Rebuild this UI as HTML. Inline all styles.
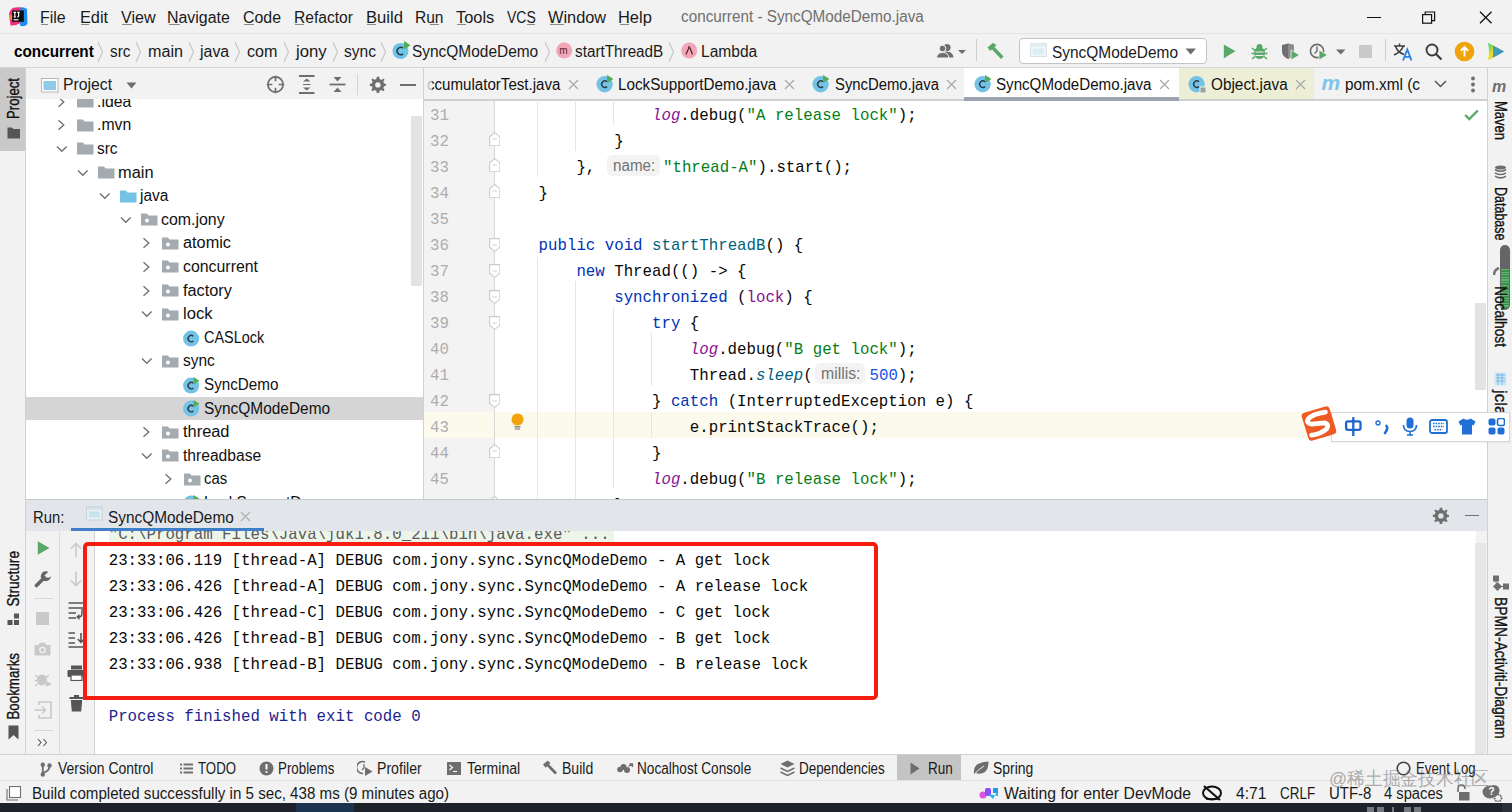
<!DOCTYPE html><html><head><meta charset="utf-8"><style>
html,body{margin:0;padding:0;width:1512px;height:812px;overflow:hidden;background:#f2f2f2;}
.a{position:absolute;}
.t{position:absolute;white-space:pre;transform-origin:0 0;}
.v{position:absolute;white-space:pre;writing-mode:vertical-rl;-webkit-text-stroke:0.35px currentColor;line-height:20px;width:20px;font-family:'Liberation Sans',sans-serif;transform-origin:50% 0;}
</style></head><body>
<div class="a" style="left:0px;top:33px;width:1512px;height:1px;background:#e3e3e3"></div>
<svg class="a" style="left:8px;top:6px;" width="20" height="21" viewBox="0 0 20 21"><path d="M11.5 1.5 Q16 0.5 19 3 L19.5 18 Q16 21.5 12 19.5 Z" fill="#1c8ef0"></path><path d="M5.5 1.8 Q9 0.8 12.5 1.5 L12.5 17 Q7 20 2.5 19.5 Q1.5 13 1 7.5 Q2.5 3 5.5 1.8 Z" fill="#f0307f"></path><path d="M1 8 Q2.5 10 4 9 L4 14 Q2 13.5 1.2 12 Z" fill="#fb8c2a"></path><rect x="4.2" y="4.5" width="11.6" height="11.3" fill="#0c0c0c"></rect><rect x="5.6" y="13.2" width="4.8" height="1.2" fill="#fff"></rect><path d="M5.6 6.3 H8 M6.8 6.3 V11 M5.6 11 H8 M9.2 6.3 H11.6 M10.6 6.3 V10 Q10.6 11 9.2 11" fill="none" stroke="#fff" stroke-width="1.2"></path></svg>
<div class="t" style="left: 40.3px; top: 8px; font-size: 16px; color: rgb(26, 26, 26); font-family: &quot;Liberation Sans&quot;, sans-serif; line-height: 20px; transform: scaleX(0.9968);">File</div>
<div class="t" style="left: 79.5px; top: 8px; font-size: 16px; color: rgb(26, 26, 26); font-family: &quot;Liberation Sans&quot;, sans-serif; line-height: 20px; transform: scaleX(1.0189);">Edit</div>
<div class="t" style="left: 120.5px; top: 8px; font-size: 16px; color: rgb(26, 26, 26); font-family: &quot;Liberation Sans&quot;, sans-serif; line-height: 20px; transform: scaleX(1.0061);">View</div>
<div class="t" style="left: 167.2px; top: 8px; font-size: 16px; color: rgb(26, 26, 26); font-family: &quot;Liberation Sans&quot;, sans-serif; line-height: 20px; transform: scaleX(0.9944);">Navigate</div>
<div class="t" style="left: 243px; top: 8px; font-size: 16px; color: rgb(26, 26, 26); font-family: &quot;Liberation Sans&quot;, sans-serif; line-height: 20px; transform: scaleX(0.9935);">Code</div>
<div class="t" style="left: 294px; top: 8px; font-size: 16px; color: rgb(26, 26, 26); font-family: &quot;Liberation Sans&quot;, sans-serif; line-height: 20px; transform: scaleX(0.9757);">Refactor</div>
<div class="t" style="left: 366px; top: 8px; font-size: 16px; color: rgb(26, 26, 26); font-family: &quot;Liberation Sans&quot;, sans-serif; line-height: 20px; transform: scaleX(1.04);">Build</div>
<div class="t" style="left: 415.2px; top: 8px; font-size: 16px; color: rgb(26, 26, 26); font-family: &quot;Liberation Sans&quot;, sans-serif; line-height: 20px; transform: scaleX(0.9707);">Run</div>
<div class="t" style="left: 455.7px; top: 8px; font-size: 16px; color: rgb(26, 26, 26); font-family: &quot;Liberation Sans&quot;, sans-serif; line-height: 20px; transform: scaleX(1.0252);">Tools</div>
<div class="t" style="left: 507px; top: 8px; font-size: 16px; color: rgb(26, 26, 26); font-family: &quot;Liberation Sans&quot;, sans-serif; line-height: 20px; transform: scaleX(0.8752);">VCS</div>
<div class="t" style="left: 548.3px; top: 8px; font-size: 16px; color: rgb(26, 26, 26); font-family: &quot;Liberation Sans&quot;, sans-serif; line-height: 20px; transform: scaleX(1.021);">Window</div>
<div class="t" style="left: 618.4px; top: 8px; font-size: 16px; color: rgb(26, 26, 26); font-family: &quot;Liberation Sans&quot;, sans-serif; line-height: 20px; transform: scaleX(1.0272);">Help</div>
<div class="a" style="left:41px;top:24px;width:7px;height:1px;background:#8a8a8a"></div>
<div class="a" style="left:80.5px;top:24px;width:8px;height:1px;background:#8a8a8a"></div>
<div class="a" style="left:121.5px;top:24px;width:10px;height:1px;background:#8a8a8a"></div>
<div class="a" style="left:168.5px;top:24px;width:11px;height:1px;background:#8a8a8a"></div>
<div class="a" style="left:244px;top:24px;width:10px;height:1px;background:#8a8a8a"></div>
<div class="a" style="left:295px;top:24px;width:9px;height:1px;background:#8a8a8a"></div>
<div class="a" style="left:367px;top:24px;width:9px;height:1px;background:#8a8a8a"></div>
<div class="a" style="left:430px;top:24px;width:9px;height:1px;background:#8a8a8a"></div>
<div class="a" style="left:457px;top:24px;width:9px;height:1px;background:#8a8a8a"></div>
<div class="a" style="left:527px;top:24px;width:8px;height:1px;background:#8a8a8a"></div>
<div class="a" style="left:549.5px;top:24px;width:14px;height:1px;background:#8a8a8a"></div>
<div class="a" style="left:619.5px;top:24px;width:9px;height:1px;background:#8a8a8a"></div>
<div class="t" style="left: 681.4px; top: 7px; font-size: 16px; color: rgb(111, 111, 111); font-family: &quot;Liberation Sans&quot;, sans-serif; line-height: 20px; transform: scaleX(0.9547);">concurrent - SyncQModeDemo.java</div>
<div class="a" style="left:1367px;top:16.5px;width:13.5px;height:1.2px;background:#111"></div>
<svg class="a" style="left:1422px;top:11px;" width="15" height="13" viewBox="0 0 15 13"><rect x="0.6" y="3.6" width="9" height="8.6" fill="none" stroke="#111" stroke-width="1.2"></rect><path d="M3.2 3.6 V1 H12.6 V9.6 H9.6" fill="none" stroke="#111" stroke-width="1.2"></path></svg>
<svg class="a" style="left:1479px;top:11px;" width="14" height="13" viewBox="0 0 14 13"><path d="M1 0.8 L12.5 12.2 M12.5 0.8 L1 12.2" stroke="#111" stroke-width="1.3"></path></svg>
<div class="a" style="left:0px;top:67px;width:1512px;height:1px;background:#d4d4d4"></div>
<div class="t" style="left: 13.5px; top: 42px; font-size: 16px; color: rgb(0, 0, 0); font-family: &quot;Liberation Sans&quot;, sans-serif; line-height: 20px; font-weight: bold; transform: scaleX(0.9548);">concurrent</div>
<div class="t" style="left: 110px; top: 42px; font-size: 16px; color: rgb(26, 26, 26); font-family: &quot;Liberation Sans&quot;, sans-serif; line-height: 20px; transform: scaleX(0.9565);">src</div>
<div class="t" style="left: 148px; top: 42px; font-size: 16px; color: rgb(26, 26, 26); font-family: &quot;Liberation Sans&quot;, sans-serif; line-height: 20px; transform: scaleX(1.009);">main</div>
<div class="t" style="left: 200.4px; top: 42px; font-size: 16px; color: rgb(26, 26, 26); font-family: &quot;Liberation Sans&quot;, sans-serif; line-height: 20px; transform: scaleX(0.9946);">java</div>
<div class="t" style="left: 247px; top: 42px; font-size: 16px; color: rgb(26, 26, 26); font-family: &quot;Liberation Sans&quot;, sans-serif; line-height: 20px; transform: scaleX(1.0055);">com</div>
<div class="t" style="left: 296px; top: 42px; font-size: 16px; color: rgb(26, 26, 26); font-family: &quot;Liberation Sans&quot;, sans-serif; line-height: 20px; transform: scaleX(1.0457);">jony</div>
<div class="t" style="left: 344px; top: 42px; font-size: 16px; color: rgb(26, 26, 26); font-family: &quot;Liberation Sans&quot;, sans-serif; line-height: 20px; transform: scaleX(0.9725);">sync</div>
<div class="t" style="left: 412.4px; top: 42px; font-size: 16px; color: rgb(26, 26, 26); font-family: &quot;Liberation Sans&quot;, sans-serif; line-height: 20px; transform: scaleX(0.9654);">SyncQModeDemo</div>
<div class="t" style="left: 575px; top: 42px; font-size: 16px; color: rgb(26, 26, 26); font-family: &quot;Liberation Sans&quot;, sans-serif; line-height: 20px; transform: scaleX(0.9548);">startThreadB</div>
<div class="t" style="left: 701px; top: 42px; font-size: 16px; color: rgb(26, 26, 26); font-family: &quot;Liberation Sans&quot;, sans-serif; line-height: 20px; transform: scaleX(0.9718);">Lambda</div>
<svg class="a" style="left:97px;top:41px;" width="7" height="22" viewBox="0 0 7 22"><path d="M1 1 L5.5 11 L1 21" fill="none" stroke="#c4c4c4" stroke-width="1.1"></path></svg>
<svg class="a" style="left:135px;top:41px;" width="7" height="22" viewBox="0 0 7 22"><path d="M1 1 L5.5 11 L1 21" fill="none" stroke="#c4c4c4" stroke-width="1.1"></path></svg>
<svg class="a" style="left:188px;top:41px;" width="7" height="22" viewBox="0 0 7 22"><path d="M1 1 L5.5 11 L1 21" fill="none" stroke="#c4c4c4" stroke-width="1.1"></path></svg>
<svg class="a" style="left:234px;top:41px;" width="7" height="22" viewBox="0 0 7 22"><path d="M1 1 L5.5 11 L1 21" fill="none" stroke="#c4c4c4" stroke-width="1.1"></path></svg>
<svg class="a" style="left:283px;top:41px;" width="7" height="22" viewBox="0 0 7 22"><path d="M1 1 L5.5 11 L1 21" fill="none" stroke="#c4c4c4" stroke-width="1.1"></path></svg>
<svg class="a" style="left:331.7px;top:41px;" width="7" height="22" viewBox="0 0 7 22"><path d="M1 1 L5.5 11 L1 21" fill="none" stroke="#c4c4c4" stroke-width="1.1"></path></svg>
<svg class="a" style="left:380px;top:41px;" width="7" height="22" viewBox="0 0 7 22"><path d="M1 1 L5.5 11 L1 21" fill="none" stroke="#c4c4c4" stroke-width="1.1"></path></svg>
<svg class="a" style="left:544px;top:41px;" width="7" height="22" viewBox="0 0 7 22"><path d="M1 1 L5.5 11 L1 21" fill="none" stroke="#c4c4c4" stroke-width="1.1"></path></svg>
<svg class="a" style="left:668px;top:41px;" width="7" height="22" viewBox="0 0 7 22"><path d="M1 1 L5.5 11 L1 21" fill="none" stroke="#c4c4c4" stroke-width="1.1"></path></svg>
<svg class="a" style="left:392px;top:40px;" width="20" height="20" viewBox="0 0 20 20"><circle cx="8.5" cy="11" r="8" fill="#6ec3e8"></circle><path d="M11 8.2 A3.6 3.6 0 1 0 11 13.8" fill="none" stroke="#2b3a45" stroke-width="1.5"></path><path d="M12 1 L18.5 5.2 L12 9.4 Z" fill="#4fae5a"></path></svg>
<svg class="a" style="left:556px;top:42px;" width="17" height="17" viewBox="0 0 17 17"><circle cx="8.2" cy="8.5" r="8" fill="#f2a7b8"></circle><text x="3.3" y="12" font-family="Liberation Sans" font-size="10" fill="#5a2030">m</text></svg>
<svg class="a" style="left:681px;top:42px;" width="17" height="17" viewBox="0 0 17 17"><circle cx="8.2" cy="8.5" r="8" fill="#f2a7b8"></circle><path d="M5 12.5 L8.2 5 M7.2 4.5 Q8.5 4.6 9 6 L11.5 12.5" fill="none" stroke="#5a2030" stroke-width="1.2"></path></svg>
<svg class="a" style="left:936px;top:43px;" width="32" height="17" viewBox="0 0 32 17"><circle cx="11" cy="4.6" r="3.6" fill="#6e6e6e"></circle><path d="M3.5 14.5 Q4 8.8 11 8.8 Q17 8.8 17.5 14.5 Z" fill="#6e6e6e"></path><circle cx="6.5" cy="5.5" r="3.3" fill="#6e6e6e" stroke="#f2f2f2" stroke-width="1"></circle><path d="M0.5 15 Q1 9.5 6.5 9.5 Q12.5 9.5 13 15 Z" fill="#6e6e6e" stroke="#f2f2f2" stroke-width="1"></path><path d="M22 7 L30 7 L26 11 Z" fill="#6e6e6e"></path></svg>
<div class="a" style="left:976px;top:39px;width:1px;height:22px;background:#cfcfcf"></div>
<svg class="a" style="left:986px;top:42px;" width="19" height="18" viewBox="0 0 19 18"><path d="M1.5 5.5 L7 0.8 L10.5 3.2 L8.5 5 L17.5 14.5 L15 17 L6 7.5 L4.3 9 Z" fill="#59a869"></path></svg>
<div class="a" style="left:1018.5px;top:38px;width:188.5px;height:25.5px;background:#fff;border:1px solid #c4c4c4;border-radius:4px;box-sizing:border-box"></div>
<svg class="a" style="left:1030px;top:42px;" width="18" height="16" viewBox="0 0 18 16"><rect x="0.5" y="1.5" width="16" height="13" fill="#eef6f8" stroke="#d6e4e8"></rect><rect x="0.5" y="1.5" width="16" height="3" fill="#e0ecef"></rect><rect x="3" y="6.5" width="11" height="6" fill="#d9eef2"></rect></svg>
<div class="t" style="left: 1052px; top: 43px; font-size: 16px; color: rgb(26, 26, 26); font-family: &quot;Liberation Sans&quot;, sans-serif; line-height: 20px; transform: scaleX(0.9639);">SyncQModeDemo</div>
<svg class="a" style="left:1185px;top:48px;" width="12" height="7" viewBox="0 0 12 7"><path d="M0.5 0.5 L11 0.5 L5.75 6.5 Z" fill="#6e6e6e"></path></svg>
<svg class="a" style="left:1223px;top:44px;" width="13" height="15" viewBox="0 0 13 15"><path d="M0.8 0.5 L12.5 7.3 L0.8 14.2 Z" fill="#59a869"></path></svg>
<svg class="a" style="left:1251px;top:43px;" width="17" height="17" viewBox="0 0 17 17"><ellipse cx="8.5" cy="10" rx="5.5" ry="6" fill="#59a869"></ellipse><circle cx="8.5" cy="4" r="3" fill="#59a869"></circle><path d="M1 5 L4 7.5 M16 5 L13 7.5 M0.5 10.5 H3.5 M16.5 10.5 H13.5 M1 16 L4 13.5 M16 16 L13 13.5" stroke="#59a869" stroke-width="1.6"></path><path d="M4.5 9 H12.5 M4.5 12.5 H12.5" stroke="#f2f2f2" stroke-width="1.1"></path></svg>
<svg class="a" style="left:1281px;top:43px;" width="19" height="17" viewBox="0 0 19 17"><path d="M1 2 L7 0.5 L13 2 V8 Q13 13.5 7 16 Q1 13.5 1 8 Z" fill="#6e6e6e"></path><path d="M7 0.5 V16 Q13 13.5 13 8 V2 Z" fill="#8c8c8c"></path><path d="M10 7 L18.5 12 L10 17 Z" fill="#59a869" stroke="#f2f2f2" stroke-width="0.8"></path></svg>
<svg class="a" style="left:1309px;top:43px;" width="20" height="17" viewBox="0 0 20 17"><circle cx="8" cy="8" r="6.6" fill="none" stroke="#6e6e6e" stroke-width="1.6"></circle><path d="M8 3.5 V8 L5.5 10.5" fill="none" stroke="#6e6e6e" stroke-width="1.5"></path><path d="M10 7 L18.5 12 L10 17 Z" fill="#59a869" stroke="#f2f2f2" stroke-width="0.8"></path></svg>
<svg class="a" style="left:1336px;top:49px;" width="10" height="6" viewBox="0 0 10 6"><path d="M0 0.5 H9.5 L4.75 5.5 Z" fill="#6e6e6e"></path></svg>
<div class="a" style="left:1359px;top:45px;width:12.5px;height:12.5px;background:#c9c9c9;border-radius:1px"></div>
<div class="a" style="left:1384.5px;top:39px;width:1px;height:22px;background:#cfcfcf"></div>
<svg class="a" style="left:1393px;top:42px;" width="21" height="19" viewBox="0 0 21 19"><path d="M1 4 H12 M6.5 1.5 V4 M2.5 4 Q4 10 11 12.5 M10.5 4 Q8 10 1 13" fill="none" stroke="#3c3c3c" stroke-width="1.5"></path><path d="M10 18.5 L14.3 7.5 L18.5 18.5 M11.5 14.8 H17" fill="none" stroke="#2680eb" stroke-width="1.8"></path></svg>
<svg class="a" style="left:1425px;top:43px;" width="18" height="18" viewBox="0 0 18 18"><circle cx="7" cy="7" r="5.5" fill="none" stroke="#3c3c3c" stroke-width="1.9"></circle><path d="M11 11 L16.5 16.5" stroke="#3c3c3c" stroke-width="2.2"></path></svg>
<svg class="a" style="left:1454px;top:41px;" width="21" height="21" viewBox="0 0 21 21"><circle cx="10.5" cy="10.5" r="9.8" fill="#f0a30a"></circle><path d="M10.5 15.5 V6.5 M6.8 9.8 L10.5 6.2 L14.2 9.8" fill="none" stroke="#fff" stroke-width="1.9"></path></svg>
<svg class="a" style="left:1487px;top:42px;" width="18" height="19" viewBox="0 0 18 19"><defs><linearGradient id="tbg" x1="0" y1="0" x2="1" y2="1"><stop offset="0" stop-color="#2ad27a"></stop><stop offset="0.45" stop-color="#f7e21a"></stop><stop offset="1" stop-color="#1a7ff0"></stop></linearGradient></defs><path d="M1 1 Q10 5 17 9.5 Q10 14 1 18 Q3 9.5 1 1 Z" fill="url(#tbg)"></path><path d="M6 3.5 Q12 6.5 17 9.5 Q12 12.5 6 15.5 Z" fill="#1a8bd8" opacity="0.8"></path></svg>
<div class="a" style="left:25px;top:68px;width:1px;height:712px;background:#d1d1d1"></div>
<div class="a" style="left:0px;top:68px;width:25px;height:83px;background:#c9c9c9"></div>
<div class="v" style="left: 4px; top: 78px; font-size: 16px; color: rgb(17, 17, 17); transform: translateY(41px) rotate(180deg) scaleY(0.8233);">Project</div>
<svg class="a" style="left:7px;top:126px;" width="14" height="13" viewBox="0 0 14 13"><path d="M0.5 1.5 H5 L6.5 3 H13 V12.5 H0.5 Z" fill="#555"></path></svg>
<div class="v" style="left: 4px; top: 551px; font-size: 16px; color: rgb(17, 17, 17); transform: translateY(55.5px) rotate(180deg) scaleY(0.8549);">Structure</div>
<svg class="a" style="left:7px;top:613px;" width="13" height="13" viewBox="0 0 13 13"><rect x="0.5" y="7" width="5" height="5" fill="#555"></rect><rect x="7" y="7" width="5" height="5" fill="#555"></rect><rect x="7" y="0.5" width="5" height="5" fill="#555"></rect></svg>
<div class="v" style="left: 4px; top: 653px; font-size: 16px; color: rgb(17, 17, 17); transform: translateY(66.5px) rotate(180deg) scaleY(0.8309);">Bookmarks</div>
<svg class="a" style="left:8px;top:725px;" width="11" height="15" viewBox="0 0 11 15"><path d="M0.5 0.5 H10.5 V14.5 L5.5 10 L0.5 14.5 Z" fill="#555"></path></svg>
<div class="a" style="left:26px;top:68px;width:397.5px;height:31px;background:#f2f2f2"></div>
<div class="a" style="left:26px;top:99px;width:397.5px;height:400px;background:#fff;overflow:hidden"></div>
<svg class="a" style="left:41px;top:78px;" width="18" height="15" viewBox="0 0 18 15"><rect x="0.5" y="0.5" width="16.5" height="13.5" fill="#fff" stroke="#b8b8b8"></rect><rect x="2.5" y="3" width="12.5" height="9" fill="#8fcbe9"></rect></svg>
<div class="t" style="left: 63px; top: 75px; font-size: 16px; color: rgb(26, 26, 26); font-family: &quot;Liberation Sans&quot;, sans-serif; line-height: 20px; transform: scaleX(0.984);">Project</div>
<svg class="a" style="left:126px;top:82px;" width="11" height="7" viewBox="0 0 11 7"><path d="M0.5 0.5 H10.5 L5.5 6.5 Z" fill="#6e6e6e"></path></svg>
<svg class="a" style="left:266px;top:75px;" width="19" height="19" viewBox="0 0 19 19"><circle cx="9.5" cy="9.5" r="7.6" fill="none" stroke="#6e6e6e" stroke-width="1.7"></circle><path d="M9.5 0.8 V6.3 M9.5 12.7 V18.2 M0.8 9.5 H6.3 M12.7 9.5 H18.2" stroke="#6e6e6e" stroke-width="1.7"></path></svg>
<svg class="a" style="left:299px;top:75px;" width="16" height="19" viewBox="0 0 16 19"><path d="M0 1 H15.5 M0 18 H15.5" stroke="#6e6e6e" stroke-width="1.8"></path><path d="M4 6.5 L7.75 3.5 L11.5 6.5 Z M4 12.5 L7.75 15.5 L11.5 12.5 Z" fill="#6e6e6e"></path><path d="M4 9.5 H11.5" stroke="#6e6e6e" stroke-width="1"></path></svg>
<svg class="a" style="left:329px;top:75px;" width="17" height="19" viewBox="0 0 17 19"><path d="M0.5 9.5 H16.5" stroke="#6e6e6e" stroke-width="1.8"></path><path d="M4.5 2 L8.5 6.5 L12.5 2 Z M4.5 17 L8.5 12.5 L12.5 17 Z" fill="#6e6e6e"></path></svg>
<div class="a" style="left:357px;top:74px;width:1px;height:21px;background:#d4d4d4"></div>
<svg class="a" style="left:369px;top:76px;" width="17" height="17" viewBox="0 0 17 17"><path d="M8.5 0.8 L10.2 0.8 L10.6 3 L12.6 3.9 L14.4 2.6 L15.6 3.8 L14.3 5.7 L15.1 7.6 L17 8 V9.8 L15.1 10.2 L14.3 12.1 L15.6 14 L14.2 15.2 L12.4 13.9 L10.5 14.7 L10.2 17 H7.8 L7.4 14.7 L5.5 13.9 L3.6 15.2 L2.3 14 L3.6 12.1 L2.8 10.2 L0.8 9.8 V7.8 L2.8 7.4 L3.6 5.6 L2.3 3.7 L3.6 2.4 L5.5 3.8 L7.4 3 L7.8 0.8 Z" fill="#6e6e6e"></path><circle cx="8.9" cy="8.9" r="2.7" fill="#f2f2f2"></circle></svg>
<div class="a" style="left:400px;top:84px;width:15.5px;height:1.8px;background:#6e6e6e"></div>
<div class="a" style="left:26px;top:397px;width:397.5px;height:23px;background:#d5d5d5"></div>
<div class="a" style="left:26px;top:99px;width:397px;height:400px;overflow:hidden">
<svg class="a" style="left:31.0px;top:-3.299999999999997px;" width="9" height="12" viewBox="0 0 9 12"><path d="M1.5 1.2 L6.8 6 L1.5 10.8" fill="none" stroke="#6e6e6e" stroke-width="1.3"></path></svg>
<svg class="a" style="left:51.0px;top:-3.799999999999997px;" width="17" height="13" viewBox="0 0 17 13"><path d="M0 0.5 H6 L7.5 2.5 H16.5 V12.5 H0 Z" fill="#a3aab0"></path></svg>
<div class="t" style="left: 71.1px; top: -7.2px; font-size: 16px; color: rgb(17, 17, 17); font-family: &quot;Liberation Sans&quot;, sans-serif; line-height: 20px; transform: scaleX(0.9855);">.idea</div>
<svg class="a" style="left:31.0px;top:20.299999999999997px;" width="9" height="12" viewBox="0 0 9 12"><path d="M1.5 1.2 L6.8 6 L1.5 10.8" fill="none" stroke="#6e6e6e" stroke-width="1.3"></path></svg>
<svg class="a" style="left:51.0px;top:19.799999999999997px;" width="17" height="13" viewBox="0 0 17 13"><path d="M0 0.5 H6 L7.5 2.5 H16.5 V12.5 H0 Z" fill="#a3aab0"></path></svg>
<div class="t" style="left: 71.1px; top: 16.4px; font-size: 16px; color: rgb(17, 17, 17); font-family: &quot;Liberation Sans&quot;, sans-serif; line-height: 20px; transform: scaleX(0.9864);">.mvn</div>
<svg class="a" style="left:30.0px;top:45.89999999999998px;" width="12" height="8" viewBox="0 0 12 8"><path d="M1 1.5 L5.8 6.3 L10.6 1.5" fill="none" stroke="#6e6e6e" stroke-width="1.3"></path></svg>
<svg class="a" style="left:51.0px;top:43.39999999999998px;" width="17" height="13" viewBox="0 0 17 13"><path d="M0 0.5 H6 L7.5 2.5 H16.5 V12.5 H0 Z" fill="#a3aab0"></path></svg>
<div class="t" style="left: 71.1px; top: 40px; font-size: 16px; color: rgb(17, 17, 17); font-family: &quot;Liberation Sans&quot;, sans-serif; line-height: 20px; transform: scaleX(0.9612);">src</div>
<svg class="a" style="left:51.349999999999994px;top:69.5px;" width="12" height="8" viewBox="0 0 12 8"><path d="M1 1.5 L5.8 6.3 L10.6 1.5" fill="none" stroke="#6e6e6e" stroke-width="1.3"></path></svg>
<svg class="a" style="left:72.35px;top:67.0px;" width="17" height="13" viewBox="0 0 17 13"><path d="M0 0.5 H6 L7.5 2.5 H16.5 V12.5 H0 Z" fill="#a3aab0"></path></svg>
<div class="t" style="left: 92.45px; top: 63.6px; font-size: 16px; color: rgb(17, 17, 17); font-family: &quot;Liberation Sans&quot;, sans-serif; line-height: 20px; transform: scaleX(1.0249);">main</div>
<svg class="a" style="left:72.7px;top:93.1px;" width="12" height="8" viewBox="0 0 12 8"><path d="M1 1.5 L5.8 6.3 L10.6 1.5" fill="none" stroke="#6e6e6e" stroke-width="1.3"></path></svg>
<svg class="a" style="left:93.7px;top:90.6px;" width="17" height="13" viewBox="0 0 17 13"><path d="M0 0.5 H6 L7.5 2.5 H16.5 V12.5 H0 Z" fill="#74c3e6"></path></svg>
<div class="t" style="left: 113.8px; top: 87.2px; font-size: 16px; color: rgb(17, 17, 17); font-family: &quot;Liberation Sans&quot;, sans-serif; line-height: 20px; transform: scaleX(0.9673);">java</div>
<svg class="a" style="left:94.05000000000001px;top:116.69999999999999px;" width="12" height="8" viewBox="0 0 12 8"><path d="M1 1.5 L5.8 6.3 L10.6 1.5" fill="none" stroke="#6e6e6e" stroke-width="1.3"></path></svg>
<svg class="a" style="left:115.05000000000001px;top:114.19999999999999px;" width="17" height="13" viewBox="0 0 17 13"><path d="M0 0.5 H6 L7.5 2.5 H16.5 V12.5 H0 Z" fill="#a3aab0"></path><circle cx="6" cy="7.6" r="2" fill="#fff"></circle></svg>
<div class="t" style="left: 135.15px; top: 110.8px; font-size: 16px; color: rgb(17, 17, 17); font-family: &quot;Liberation Sans&quot;, sans-serif; line-height: 20px; transform: scaleX(0.994);">com.jony</div>
<svg class="a" style="left:116.4px;top:138.3px;" width="9" height="12" viewBox="0 0 9 12"><path d="M1.5 1.2 L6.8 6 L1.5 10.8" fill="none" stroke="#6e6e6e" stroke-width="1.3"></path></svg>
<svg class="a" style="left:136.4px;top:137.8px;" width="17" height="13" viewBox="0 0 17 13"><path d="M0 0.5 H6 L7.5 2.5 H16.5 V12.5 H0 Z" fill="#a3aab0"></path><circle cx="6" cy="7.6" r="2" fill="#fff"></circle></svg>
<div class="t" style="left: 156.5px; top: 134.4px; font-size: 16px; color: rgb(17, 17, 17); font-family: &quot;Liberation Sans&quot;, sans-serif; line-height: 20px; transform: scaleX(1.0186);">atomic</div>
<svg class="a" style="left:116.4px;top:161.90000000000003px;" width="9" height="12" viewBox="0 0 9 12"><path d="M1.5 1.2 L6.8 6 L1.5 10.8" fill="none" stroke="#6e6e6e" stroke-width="1.3"></path></svg>
<svg class="a" style="left:136.4px;top:161.40000000000003px;" width="17" height="13" viewBox="0 0 17 13"><path d="M0 0.5 H6 L7.5 2.5 H16.5 V12.5 H0 Z" fill="#a3aab0"></path><circle cx="6" cy="7.6" r="2" fill="#fff"></circle></svg>
<div class="t" style="left: 156.5px; top: 158px; font-size: 16px; color: rgb(17, 17, 17); font-family: &quot;Liberation Sans&quot;, sans-serif; line-height: 20px; transform: scaleX(0.9921);">concurrent</div>
<svg class="a" style="left:116.4px;top:185.5px;" width="9" height="12" viewBox="0 0 9 12"><path d="M1.5 1.2 L6.8 6 L1.5 10.8" fill="none" stroke="#6e6e6e" stroke-width="1.3"></path></svg>
<svg class="a" style="left:136.4px;top:185.0px;" width="17" height="13" viewBox="0 0 17 13"><path d="M0 0.5 H6 L7.5 2.5 H16.5 V12.5 H0 Z" fill="#a3aab0"></path><circle cx="6" cy="7.6" r="2" fill="#fff"></circle></svg>
<div class="t" style="left: 156.5px; top: 181.6px; font-size: 16px; color: rgb(17, 17, 17); font-family: &quot;Liberation Sans&quot;, sans-serif; line-height: 20px; transform: scaleX(1.0184);">factory</div>
<svg class="a" style="left:115.4px;top:211.09999999999997px;" width="12" height="8" viewBox="0 0 12 8"><path d="M1 1.5 L5.8 6.3 L10.6 1.5" fill="none" stroke="#6e6e6e" stroke-width="1.3"></path></svg>
<svg class="a" style="left:136.4px;top:208.59999999999997px;" width="17" height="13" viewBox="0 0 17 13"><path d="M0 0.5 H6 L7.5 2.5 H16.5 V12.5 H0 Z" fill="#a3aab0"></path><circle cx="6" cy="7.6" r="2" fill="#fff"></circle></svg>
<div class="t" style="left: 156.5px; top: 205.2px; font-size: 16px; color: rgb(17, 17, 17); font-family: &quot;Liberation Sans&quot;, sans-serif; line-height: 20px; transform: scaleX(1.0368);">lock</div>
<svg class="a" style="left:157.2px;top:230.5px;" width="17" height="17" viewBox="0 0 17 17"><circle cx="8.1" cy="8.6" r="8" fill="#74c3e6"></circle><path d="M10.3 6.3 A3.1 3.1 0 1 0 10.3 10.9" fill="none" stroke="#2b3a45" stroke-width="1.4"></path></svg>
<div class="t" style="left: 177.85px; top: 228.8px; font-size: 16px; color: rgb(17, 17, 17); font-family: &quot;Liberation Sans&quot;, sans-serif; line-height: 20px; transform: scaleX(0.9018);">CASLock</div>
<svg class="a" style="left:115.4px;top:258.3px;" width="12" height="8" viewBox="0 0 12 8"><path d="M1 1.5 L5.8 6.3 L10.6 1.5" fill="none" stroke="#6e6e6e" stroke-width="1.3"></path></svg>
<svg class="a" style="left:136.4px;top:255.8px;" width="17" height="13" viewBox="0 0 17 13"><path d="M0 0.5 H6 L7.5 2.5 H16.5 V12.5 H0 Z" fill="#a3aab0"></path><circle cx="6" cy="7.6" r="2" fill="#fff"></circle></svg>
<div class="t" style="left: 156.5px; top: 252.4px; font-size: 16px; color: rgb(17, 17, 17); font-family: &quot;Liberation Sans&quot;, sans-serif; line-height: 20px; transform: scaleX(0.9664);">sync</div>
<svg class="a" style="left:157.2px;top:277.70000000000005px;" width="17" height="17" viewBox="0 0 17 17"><circle cx="8.1" cy="8.6" r="8" fill="#74c3e6"></circle><path d="M10.3 6.3 A3.1 3.1 0 1 0 10.3 10.9" fill="none" stroke="#2b3a45" stroke-width="1.4"></path><path d="M10.5 0 L16.5 3.8 L10.5 7.6 Z" fill="#4fae5a"></path></svg>
<div class="t" style="left: 177.85px; top: 276px; font-size: 16px; color: rgb(17, 17, 17); font-family: &quot;Liberation Sans&quot;, sans-serif; line-height: 20px; transform: scaleX(0.9514);">SyncDemo</div>
<svg class="a" style="left:157.2px;top:301.3px;" width="17" height="17" viewBox="0 0 17 17"><circle cx="8.1" cy="8.6" r="8" fill="#74c3e6"></circle><path d="M10.3 6.3 A3.1 3.1 0 1 0 10.3 10.9" fill="none" stroke="#2b3a45" stroke-width="1.4"></path><path d="M10.5 0 L16.5 3.8 L10.5 7.6 Z" fill="#4fae5a"></path></svg>
<div class="t" style="left: 177.85px; top: 299.6px; font-size: 16px; color: rgb(17, 17, 17); font-family: &quot;Liberation Sans&quot;, sans-serif; line-height: 20px; transform: scaleX(0.965);">SyncQModeDemo</div>
<svg class="a" style="left:116.4px;top:327.1px;" width="9" height="12" viewBox="0 0 9 12"><path d="M1.5 1.2 L6.8 6 L1.5 10.8" fill="none" stroke="#6e6e6e" stroke-width="1.3"></path></svg>
<svg class="a" style="left:136.4px;top:326.6px;" width="17" height="13" viewBox="0 0 17 13"><path d="M0 0.5 H6 L7.5 2.5 H16.5 V12.5 H0 Z" fill="#a3aab0"></path><circle cx="6" cy="7.6" r="2" fill="#fff"></circle></svg>
<div class="t" style="left: 156.5px; top: 323.2px; font-size: 16px; color: rgb(17, 17, 17); font-family: &quot;Liberation Sans&quot;, sans-serif; line-height: 20px; transform: scaleX(1.0248);">thread</div>
<svg class="a" style="left:115.4px;top:352.7px;" width="12" height="8" viewBox="0 0 12 8"><path d="M1 1.5 L5.8 6.3 L10.6 1.5" fill="none" stroke="#6e6e6e" stroke-width="1.3"></path></svg>
<svg class="a" style="left:136.4px;top:350.2px;" width="17" height="13" viewBox="0 0 17 13"><path d="M0 0.5 H6 L7.5 2.5 H16.5 V12.5 H0 Z" fill="#a3aab0"></path><circle cx="6" cy="7.6" r="2" fill="#fff"></circle></svg>
<div class="t" style="left: 156.5px; top: 346.8px; font-size: 16px; color: rgb(17, 17, 17); font-family: &quot;Liberation Sans&quot;, sans-serif; line-height: 20px; transform: scaleX(0.9767);">threadbase</div>
<svg class="a" style="left:137.75px;top:374.3px;" width="9" height="12" viewBox="0 0 9 12"><path d="M1.5 1.2 L6.8 6 L1.5 10.8" fill="none" stroke="#6e6e6e" stroke-width="1.3"></path></svg>
<svg class="a" style="left:157.75px;top:373.8px;" width="17" height="13" viewBox="0 0 17 13"><path d="M0 0.5 H6 L7.5 2.5 H16.5 V12.5 H0 Z" fill="#a3aab0"></path><circle cx="6" cy="7.6" r="2" fill="#fff"></circle></svg>
<div class="t" style="left: 177.85px; top: 370.4px; font-size: 16px; color: rgb(17, 17, 17); font-family: &quot;Liberation Sans&quot;, sans-serif; line-height: 20px; transform: scaleX(0.9295);">cas</div>
<svg class="a" style="left:157.2px;top:395.70000000000005px;" width="17" height="17" viewBox="0 0 17 17"><circle cx="8.1" cy="8.6" r="8" fill="#74c3e6"></circle><path d="M10.3 6.3 A3.1 3.1 0 1 0 10.3 10.9" fill="none" stroke="#2b3a45" stroke-width="1.4"></path><path d="M10.5 0 L16.5 3.8 L10.5 7.6 Z" fill="#4fae5a"></path></svg>
<div class="t" style="left: 177.85px; top: 394px; font-size: 16px; color: rgb(17, 17, 17); font-family: &quot;Liberation Sans&quot;, sans-serif; line-height: 20px; transform: scaleX(0.9595);">LockSupportDemo</div>
</div>
<div class="a" style="left:411px;top:116px;width:11px;height:170px;background:#e3e3e3;border-radius:1px"></div>
<div class="a" style="left:423.5px;top:99px;width:1064px;height:1.7px;background:#d0d0d0"></div>
<div class="a" style="left:423px;top:68px;width:1px;height:431px;background:#d1d1d1"></div>
<div class="a" style="left:964px;top:68px;width:215px;height:31px;background:#fff"></div>
<div class="a" style="left:964px;top:97px;width:215px;height:3.7px;background:#9da2b1"></div>
<div class="a" style="left:1179px;top:68px;width:135px;height:31px;background:#eceed6"></div>
<div class="t" style="left: 427px; top: 75px; font-size: 16px; color: rgb(17, 17, 17); font-family: &quot;Liberation Sans&quot;, sans-serif; line-height: 20px; transform: scaleX(0.9435);">ccumulatorTest.java</div>
<div class="a" style="left:424px;top:76px;width:8px;height:18px;background:linear-gradient(90deg,#f2f2f2,rgba(242,242,242,0.6))"></div>
<svg class="a" style="left:568px;top:79px;" width="11" height="11" viewBox="0 0 11 11"><path d="M1 1 L10 10 M10 1 L1 10" stroke="#a8a8a8" stroke-width="1.2"></path></svg>
<svg class="a" style="left:596px;top:75px;" width="19" height="19" viewBox="0 0 19 19"><circle cx="8.6" cy="9.2" r="8.2" fill="#74c3e6"></circle><path d="M11 6.8 A3.2 3.2 0 1 0 11 11.6" fill="none" stroke="#2b3a45" stroke-width="1.4"></path><path d="M11 0 L17.5 4 L11 8 Z" fill="#4fae5a"></path></svg>
<div class="t" style="left: 618px; top: 75px; font-size: 16px; color: rgb(17, 17, 17); font-family: &quot;Liberation Sans&quot;, sans-serif; line-height: 20px; transform: scaleX(0.9518);">LockSupportDemo.java</div>
<svg class="a" style="left:783.5px;top:79px;" width="11" height="11" viewBox="0 0 11 11"><path d="M1 1 L10 10 M10 1 L1 10" stroke="#a8a8a8" stroke-width="1.2"></path></svg>
<svg class="a" style="left:812px;top:75px;" width="19" height="19" viewBox="0 0 19 19"><circle cx="8.6" cy="9.2" r="8.2" fill="#74c3e6"></circle><path d="M11 6.8 A3.2 3.2 0 1 0 11 11.6" fill="none" stroke="#2b3a45" stroke-width="1.4"></path><path d="M11 0 L17.5 4 L11 8 Z" fill="#4fae5a"></path></svg>
<div class="t" style="left: 834.7px; top: 75px; font-size: 16px; color: rgb(17, 17, 17); font-family: &quot;Liberation Sans&quot;, sans-serif; line-height: 20px; transform: scaleX(0.9273);">SyncDemo.java</div>
<svg class="a" style="left:946px;top:79px;" width="11" height="11" viewBox="0 0 11 11"><path d="M1 1 L10 10 M10 1 L1 10" stroke="#a8a8a8" stroke-width="1.2"></path></svg>
<svg class="a" style="left:974px;top:75px;" width="19" height="19" viewBox="0 0 19 19"><circle cx="8.6" cy="9.2" r="8.2" fill="#74c3e6"></circle><path d="M11 6.8 A3.2 3.2 0 1 0 11 11.6" fill="none" stroke="#2b3a45" stroke-width="1.4"></path><path d="M11 0 L17.5 4 L11 8 Z" fill="#4fae5a"></path></svg>
<div class="t" style="left: 996px; top: 75px; font-size: 16px; color: rgb(17, 17, 17); font-family: &quot;Liberation Sans&quot;, sans-serif; line-height: 20px; transform: scaleX(0.9452);">SyncQModeDemo.java</div>
<svg class="a" style="left:1159px;top:79px;" width="11" height="11" viewBox="0 0 11 11"><path d="M1 1 L10 10 M10 1 L1 10" stroke="#a8a8a8" stroke-width="1.2"></path></svg>
<svg class="a" style="left:1188px;top:75px;" width="19" height="19" viewBox="0 0 19 19"><circle cx="8.6" cy="9.2" r="8.2" fill="#74c3e6"></circle><path d="M11 6.8 A3.2 3.2 0 1 0 11 11.6" fill="none" stroke="#2b3a45" stroke-width="1.4"></path><rect x="12" y="12" width="6" height="6" fill="#9aa0a6" stroke="#f1f1de" stroke-width="1"></rect></svg>
<div class="t" style="left: 1210.8px; top: 75px; font-size: 16px; color: rgb(17, 17, 17); font-family: &quot;Liberation Sans&quot;, sans-serif; line-height: 20px; transform: scaleX(0.9582);">Object.java</div>
<svg class="a" style="left:1294.5px;top:79px;" width="11" height="11" viewBox="0 0 11 11"><path d="M1 1 L10 10 M10 1 L1 10" stroke="#a8a8a8" stroke-width="1.2"></path></svg>
<svg class="a" style="left:1322px;top:76px;" width="19" height="14" viewBox="0 0 19 14"><text x="-0.5" y="13.5" font-family="Liberation Sans" font-style="italic" font-weight="bold" font-size="21" fill="#7fc4ea">m</text></svg>
<div class="t" style="left: 1345.4px; top: 75px; font-size: 16px; color: rgb(17, 17, 17); font-family: &quot;Liberation Sans&quot;, sans-serif; line-height: 20px; transform: scaleX(0.9587);">pom.xml (c</div>
<svg class="a" style="left:1434px;top:80px;" width="13" height="8" viewBox="0 0 13 8"><path d="M1 1 L6.5 6.5 L12 1" fill="none" stroke="#555" stroke-width="1.5"></path></svg>
<svg class="a" style="left:1470px;top:76px;" width="6" height="17" viewBox="0 0 6 17"><circle cx="3" cy="2.5" r="1.9" fill="#6e6e6e"></circle><circle cx="3" cy="8.5" r="1.9" fill="#6e6e6e"></circle><circle cx="3" cy="14.5" r="1.9" fill="#6e6e6e"></circle></svg>
<div class="a" style="left:424px;top:100.7px;width:1063px;height:398.3px;background:#fff"></div>
<div class="a" style="left:424px;top:100.7px;width:70px;height:398.3px;background:#f3f3f3"></div>
<div class="a" style="left:424px;top:412px;width:1051px;height:26px;background:#fcfaed"></div>
<div class="t" style="left:430px;top:103.1px;font:15.75px 'Liberation Mono',monospace;line-height:26px;color:#adadad">31</div>
<div class="t" style="left:430px;top:129.1px;font:15.75px 'Liberation Mono',monospace;line-height:26px;color:#adadad">32</div>
<div class="t" style="left:430px;top:155.1px;font:15.75px 'Liberation Mono',monospace;line-height:26px;color:#adadad">33</div>
<div class="t" style="left:430px;top:181.1px;font:15.75px 'Liberation Mono',monospace;line-height:26px;color:#adadad">34</div>
<div class="t" style="left:430px;top:207.1px;font:15.75px 'Liberation Mono',monospace;line-height:26px;color:#adadad">35</div>
<div class="t" style="left:430px;top:233.1px;font:15.75px 'Liberation Mono',monospace;line-height:26px;color:#adadad">36</div>
<div class="t" style="left:430px;top:259.1px;font:15.75px 'Liberation Mono',monospace;line-height:26px;color:#adadad">37</div>
<div class="t" style="left:430px;top:285.1px;font:15.75px 'Liberation Mono',monospace;line-height:26px;color:#adadad">38</div>
<div class="t" style="left:430px;top:311.1px;font:15.75px 'Liberation Mono',monospace;line-height:26px;color:#adadad">39</div>
<div class="t" style="left:430px;top:337.1px;font:15.75px 'Liberation Mono',monospace;line-height:26px;color:#adadad">40</div>
<div class="t" style="left:430px;top:363.1px;font:15.75px 'Liberation Mono',monospace;line-height:26px;color:#adadad">41</div>
<div class="t" style="left:430px;top:389.1px;font:15.75px 'Liberation Mono',monospace;line-height:26px;color:#adadad">42</div>
<div class="t" style="left:430px;top:415.1px;font:15.75px 'Liberation Mono',monospace;line-height:26px;color:#adadad">43</div>
<div class="t" style="left:430px;top:441.1px;font:15.75px 'Liberation Mono',monospace;line-height:26px;color:#adadad">44</div>
<div class="t" style="left:430px;top:467.1px;font:15.75px 'Liberation Mono',monospace;line-height:26px;color:#adadad">45</div>
<div class="t" style="left:430px;top:493.1px;font:15.75px 'Liberation Mono',monospace;line-height:26px;color:#adadad">46</div>
<div class="a" style="left:494px;top:100px;width:1px;height:399px;background:#d8d8d8"></div>
<svg class="a" style="left:488.75px;top:131.9px;" width="11.5" height="14.5" viewBox="0 0 11.5 14.5"><path d="M0.6 4.8 L5.75 0.6 L10.9 4.8 V13.9 H0.6 Z" fill="#fff" stroke="#cccccc" stroke-width="1.1"></path><path d="M3.6 7 H7.9" stroke="#cfcfcf" stroke-width="1"></path></svg>
<svg class="a" style="left:488.75px;top:157.9px;" width="11.5" height="14.5" viewBox="0 0 11.5 14.5"><path d="M0.6 4.8 L5.75 0.6 L10.9 4.8 V13.9 H0.6 Z" fill="#fff" stroke="#cccccc" stroke-width="1.1"></path><path d="M3.6 7 H7.9" stroke="#cfcfcf" stroke-width="1"></path></svg>
<svg class="a" style="left:488.75px;top:183.9px;" width="11.5" height="14.5" viewBox="0 0 11.5 14.5"><path d="M0.6 4.8 L5.75 0.6 L10.9 4.8 V13.9 H0.6 Z" fill="#fff" stroke="#cccccc" stroke-width="1.1"></path><path d="M3.6 7 H7.9" stroke="#cfcfcf" stroke-width="1"></path></svg>
<svg class="a" style="left:488.75px;top:443.9px;" width="11.5" height="14.5" viewBox="0 0 11.5 14.5"><path d="M0.6 4.8 L5.75 0.6 L10.9 4.8 V13.9 H0.6 Z" fill="#fff" stroke="#cccccc" stroke-width="1.1"></path><path d="M3.6 7 H7.9" stroke="#cfcfcf" stroke-width="1"></path></svg>
<svg class="a" style="left:488.75px;top:495.9px;" width="11.5" height="14.5" viewBox="0 0 11.5 14.5"><path d="M0.6 4.8 L5.75 0.6 L10.9 4.8 V13.9 H0.6 Z" fill="#fff" stroke="#cccccc" stroke-width="1.1"></path><path d="M3.6 7 H7.9" stroke="#cfcfcf" stroke-width="1"></path></svg>
<svg class="a" style="left:488.75px;top:238.2px;" width="11.5" height="14.5" viewBox="0 0 11.5 14.5"><path d="M0.6 0.6 H10.9 V9.2 L5.75 13.4 L0.6 9.2 Z" fill="#fff" stroke="#cccccc" stroke-width="1.1"></path><path d="M3.6 7 H7.9" stroke="#cfcfcf" stroke-width="1"></path></svg>
<svg class="a" style="left:488.75px;top:264.2px;" width="11.5" height="14.5" viewBox="0 0 11.5 14.5"><path d="M0.6 0.6 H10.9 V9.2 L5.75 13.4 L0.6 9.2 Z" fill="#fff" stroke="#cccccc" stroke-width="1.1"></path><path d="M3.6 7 H7.9" stroke="#cfcfcf" stroke-width="1"></path></svg>
<svg class="a" style="left:488.75px;top:290.2px;" width="11.5" height="14.5" viewBox="0 0 11.5 14.5"><path d="M0.6 0.6 H10.9 V9.2 L5.75 13.4 L0.6 9.2 Z" fill="#fff" stroke="#cccccc" stroke-width="1.1"></path><path d="M3.6 7 H7.9" stroke="#cfcfcf" stroke-width="1"></path></svg>
<svg class="a" style="left:488.75px;top:316.2px;" width="11.5" height="14.5" viewBox="0 0 11.5 14.5"><path d="M0.6 0.6 H10.9 V9.2 L5.75 13.4 L0.6 9.2 Z" fill="#fff" stroke="#cccccc" stroke-width="1.1"></path><path d="M3.6 7 H7.9" stroke="#cfcfcf" stroke-width="1"></path></svg>
<svg class="a" style="left:488.75px;top:394.2px;" width="11.5" height="14.5" viewBox="0 0 11.5 14.5"><path d="M0.6 0.6 H10.9 V9.2 L5.75 13.4 L0.6 9.2 Z" fill="#fff" stroke="#cccccc" stroke-width="1.1"></path><path d="M3.6 7 H7.9" stroke="#cfcfcf" stroke-width="1"></path></svg>
<svg class="a" style="left:510px;top:413px;" width="15" height="19" viewBox="0 0 15 19"><circle cx="7.5" cy="6.5" r="6" fill="#f0a30a"></circle><rect x="4.5" y="9" width="6" height="3" fill="#f0a30a"></rect><path d="M4.5 13.8 H10.5 M5 16 H10" stroke="#6e6e6e" stroke-width="1.2"></path></svg>
<div class="a" style="left:537px;top:100px;width:1px;height:77px;background:#e6e6e6"></div>
<div class="a" style="left:537px;top:257px;width:1px;height:242px;background:#e6e6e6"></div>
<div class="a" style="left:575px;top:100px;width:1px;height:51px;background:#e6e6e6"></div>
<div class="a" style="left:575px;top:281px;width:1px;height:218px;background:#e6e6e6"></div>
<div class="a" style="left:612.5px;top:100px;width:1px;height:25px;background:#e6e6e6"></div>
<div class="a" style="left:612.5px;top:307px;width:1px;height:182px;background:#e6e6e6"></div>
<div class="a" style="left:651px;top:333px;width:1px;height:53px;background:#e6e6e6"></div>
<div class="a" style="left:651px;top:412px;width:1px;height:26px;background:#e6e6e6"></div>
<div class="t" style="left:652.0px;top:103.1px;font:15.75px 'Liberation Mono',monospace;line-height:26px;color:#080808"><span style="color:#871094;font-style:italic">log</span>.debug(<span style="color:#067d17">"A release lock"</span>);</div>
<div class="t" style="left:614.2px;top:129.1px;font:15.75px 'Liberation Mono',monospace;line-height:26px;color:#080808">}</div>
<div class="t" style="left:576.4px;top:155.1px;font:15.75px 'Liberation Mono',monospace;line-height:26px;color:#080808">},</div>
<div class="a" style="left:606.7px;top:154.8px;width:53.5px;height:20.8px;background:#f3f3f3;border-radius:5px"></div>
<div class="t" style="left: 612.8px; top: 156px; font-size: 16px; color: rgb(115, 115, 115); font-family: &quot;Liberation Sans&quot;, sans-serif; line-height: 20px; transform: scaleX(0.949);">name:</div>
<div class="t" style="left:663px;top:155.1px;font:15.75px 'Liberation Mono',monospace;line-height:26px;color:#080808"><span style="color:#067d17">"thread-A"</span>).start();</div>
<div class="t" style="left:538.6px;top:181.1px;font:15.75px 'Liberation Mono',monospace;line-height:26px;color:#080808">}</div>
<div class="t" style="left:538.6px;top:233.1px;font:15.75px 'Liberation Mono',monospace;line-height:26px;color:#080808"><span style="color:#0033b3">public void </span><span style="color:#00627a">startThreadB</span>() {</div>
<div class="t" style="left:576.4px;top:259.1px;font:15.75px 'Liberation Mono',monospace;line-height:26px;color:#080808"><span style="color:#0033b3">new </span>Thread(() -&gt; {</div>
<div class="t" style="left:614.2px;top:285.1px;font:15.75px 'Liberation Mono',monospace;line-height:26px;color:#080808"><span style="color:#0033b3">synchronized </span>(<span style="color:#871094">lock</span>) {</div>
<div class="t" style="left:652.0px;top:311.1px;font:15.75px 'Liberation Mono',monospace;line-height:26px;color:#080808"><span style="color:#0033b3">try </span>{</div>
<div class="t" style="left:689.8px;top:337.1px;font:15.75px 'Liberation Mono',monospace;line-height:26px;color:#080808"><span style="color:#871094;font-style:italic">log</span>.debug(<span style="color:#067d17">"B get lock"</span>);</div>
<div class="t" style="left:689.8px;top:363.1px;font:15.75px 'Liberation Mono',monospace;line-height:26px;color:#080808">Thread.<span style="color:#00627a;font-style:italic">sleep</span>(</div>
<div class="a" style="left:814.9px;top:362.8px;width:50.6px;height:20.8px;background:#f3f3f3;border-radius:5px"></div>
<div class="t" style="left: 821px; top: 364px; font-size: 16px; color: rgb(115, 115, 115); font-family: &quot;Liberation Sans&quot;, sans-serif; line-height: 20px; transform: scaleX(0.9875);">millis:</div>
<div class="t" style="left:869.5px;top:363.1px;font:15.75px 'Liberation Mono',monospace;line-height:26px;color:#080808"><span style="color:#1750eb">500</span>);</div>
<div class="t" style="left:652.0px;top:389.1px;font:15.75px 'Liberation Mono',monospace;line-height:26px;color:#080808">} <span style="color:#0033b3">catch </span>(InterruptedException e) {</div>
<div class="t" style="left:689.8px;top:415.1px;font:15.75px 'Liberation Mono',monospace;line-height:26px;color:#080808">e.printStackTrace();</div>
<div class="t" style="left:652.0px;top:441.1px;font:15.75px 'Liberation Mono',monospace;line-height:26px;color:#080808">}</div>
<div class="t" style="left:652.0px;top:467.1px;font:15.75px 'Liberation Mono',monospace;line-height:26px;color:#080808"><span style="color:#871094;font-style:italic">log</span>.debug(<span style="color:#067d17">"B release lock"</span>);</div>
<div class="t" style="left:614.2px;top:493.1px;font:15.75px 'Liberation Mono',monospace;line-height:26px;color:#080808">}</div>
<svg class="a" style="left:1464px;top:109px;" width="15" height="12" viewBox="0 0 15 12"><path d="M1.2 6 L5.3 10 L13.8 1.5" fill="none" stroke="#59a869" stroke-width="2.4"></path></svg>
<div class="a" style="left:1475px;top:303px;width:11px;height:87px;background:#e3e3e3"></div>
<div class="a" style="left:1487px;top:68px;width:1px;height:712px;background:#d1d1d1"></div>
<div class="a" style="left:1488px;top:68px;width:24px;height:712px;background:#f2f2f2"></div>
<svg class="a" style="left:1492px;top:81px;" width="17" height="12" viewBox="0 0 17 12"><text x="0" y="11" font-family="Liberation Sans" font-style="italic" font-weight="bold" font-size="16" fill="#6e6e6e">m</text></svg>
<div class="v" style="left: 1490px; top: 101px; font-size: 16px; color: rgb(17, 17, 17); transform: scaleY(0.812);">Maven</div>
<svg class="a" style="left:1494px;top:165px;" width="13" height="15" viewBox="0 0 13 15"><ellipse cx="6.5" cy="2.5" rx="5.5" ry="2" fill="#6e6e6e"></ellipse><path d="M1 4.5 Q6.5 8 12 4.5 M1 7.8 Q6.5 11.3 12 7.8 M1 11.1 Q6.5 14.6 12 11.1" fill="none" stroke="#6e6e6e" stroke-width="1.6"></path></svg>
<div class="v" style="left: 1490px; top: 187px; font-size: 16px; color: rgb(17, 17, 17); transform: scaleY(0.781);">Database</div>
<div class="a" style="left:1500px;top:244.5px;width:9.5px;height:65px;background:#636566;border-radius:5px"></div>
<div class="a" style="left:1501px;top:269px;width:7.5px;height:39px;background:repeating-linear-gradient(180deg,#5fb56e 0 1.2px,#3c8f4c 1.2px 2.6px);border-radius:0 0 3px 3px"></div>
<svg class="a" style="left:1493px;top:267px;" width="7" height="9" viewBox="0 0 7 9"><path d="M1 8 Q1 3 6 1" stroke="#777" stroke-width="2.6" fill="none"></path></svg>
<div class="v" style="left: 1490px; top: 286px; font-size: 16px; color: rgb(17, 17, 17); transform: scaleY(0.8573);">Nocalhost</div>
<svg class="a" style="left:1494px;top:372px;" width="13" height="14" viewBox="0 0 13 14"><rect x="0.5" y="0.5" width="12" height="13" fill="#cfe6f3"></rect><path d="M2 3 H11 M2 6 H11 M2 9 H11 M4 1 V13 M8 1 V13" stroke="#6ab0dc" stroke-width="0.8"></path></svg>
<div class="v" style="left: 1490px; top: 390px; font-size: 16px; color: rgb(17, 17, 17); transform: scaleY(1.0533);">jclasslib</div>
<svg class="a" style="left:1492px;top:575px;" width="18" height="17" viewBox="0 0 18 17"><rect x="1" y="0.5" width="6" height="6" fill="#6e6e6e"></rect><path d="M5.5 7 L10 11.5 L5.5 16 L1 11.5 Z" fill="#6e6e6e"></path><rect x="11" y="8.5" width="6" height="6" fill="#6e6e6e"></rect><path d="M4 6 V8 M7 11.5 H11" stroke="#6e6e6e" stroke-width="1"></path></svg>
<div class="v" style="left: 1490px; top: 596.7px; font-size: 16px; color: rgb(17, 17, 17); transform: scaleY(0.8656);">BPMN-Activiti-Diagram</div>
<div class="a" style="left:1488px;top:441px;width:24px;height:30px;background:#f2f2f2"></div>
<div class="a" style="left:1331px;top:411.5px;width:179px;height:30px;background:#fff;border:1px solid #d6d6d6;box-sizing:border-box;box-shadow:0 1px 2px rgba(0,0,0,0.06)"></div>
<svg class="a" style="left:1299px;top:404px;" width="40" height="39" viewBox="0 0 40 39"><g transform="rotate(-17 20 19.5)"><rect x="5.5" y="5" width="29" height="29" rx="3.5" fill="#ee5a24"></rect><path d="M29.5 10.5 Q17 8.5 11 12 Q7.5 15.5 13 18 L25.5 20.5 Q30 23.5 25.5 27 Q18 30.5 9.5 28.5" fill="none" stroke="#fff" stroke-width="4.8" stroke-linecap="round"></path></g></svg>
<svg class="a" style="left:1344px;top:417px;" width="19" height="19" viewBox="0 0 19 19"><rect x="2.1" y="4.3" width="14.4" height="8.6" rx="1.8" fill="none" stroke="#1a66cc" stroke-width="2.3"></rect><path d="M9.3 1 V18.5" stroke="#1a66cc" stroke-width="2.3" stroke-linecap="round"></path></svg>
<svg class="a" style="left:1375px;top:418px;" width="15" height="17" viewBox="0 0 15 17"><circle cx="3" cy="5" r="2" fill="none" stroke="#1f6fd6" stroke-width="1.4"></circle><path d="M11.5 8 Q13.5 10.5 10 15" fill="none" stroke="#1f6fd6" stroke-width="2.6" stroke-linecap="round"></path></svg>
<svg class="a" style="left:1402px;top:417px;" width="16" height="19" viewBox="0 0 16 19"><rect x="4.5" y="0.5" width="7" height="11" rx="3.5" fill="#1f6fd6"></rect><path d="M1.5 8 Q1.5 14.5 8 14.5 Q14.5 14.5 14.5 8 M8 14.5 V18 M5 18 H11" fill="none" stroke="#1f6fd6" stroke-width="1.6"></path></svg>
<svg class="a" style="left:1429px;top:419px;" width="19" height="15" viewBox="0 0 19 15"><rect x="1" y="1" width="17" height="13" rx="2" fill="none" stroke="#1f6fd6" stroke-width="1.8"></rect><path d="M4 4.5 H15 M4 7.5 H15 M5.5 10.8 H13.5" stroke="#1f6fd6" stroke-width="1.6" stroke-dasharray="1.6 1"></path></svg>
<svg class="a" style="left:1458px;top:418px;" width="18" height="17" viewBox="0 0 18 17"><path d="M5.5 0.5 L0.5 3.5 L2.3 7.5 L4 6.8 V16.5 H14 V6.8 L15.7 7.5 L17.5 3.5 L12.5 0.5 Q9 3 5.5 0.5 Z" fill="#1f6fd6"></path></svg>
<svg class="a" style="left:1488px;top:418px;" width="17" height="17" viewBox="0 0 17 17"><rect x="0.5" y="0.5" width="7" height="7" rx="2" fill="#1f6fd6"></rect><rect x="9.5" y="0.5" width="7" height="7" rx="2" fill="none" stroke="#1f6fd6" stroke-width="1.6"></rect><rect x="0.5" y="9.5" width="7" height="7" rx="2" fill="#1f6fd6"></rect><rect x="9.5" y="9.5" width="7" height="7" rx="2" fill="#1f6fd6"></rect></svg>
<div class="a" style="left:26px;top:498.5px;width:1461px;height:1px;background:#c9c9c9"></div>
<div class="a" style="left:26px;top:499.5px;width:1461px;height:31.5px;background:#e2e5e9"></div>
<div class="t" style="left: 32.7px; top: 508px; font-size: 16px; color: rgb(26, 26, 26); font-family: &quot;Liberation Sans&quot;, sans-serif; line-height: 20px; transform: scaleX(0.9261);">Run:</div>
<svg class="a" style="left:86px;top:505px;" width="17" height="17" viewBox="0 0 17 17"><rect x="0.5" y="1.5" width="15.5" height="13.5" fill="#e9f0f3" stroke="#c5d3d9"></rect><rect x="0.5" y="1.5" width="15.5" height="3" fill="#d3dfe4"></rect><rect x="3" y="6.5" width="10.5" height="6" fill="#c9e3ec"></rect></svg>
<div class="t" style="left: 107.7px; top: 508px; font-size: 16px; color: rgb(26, 26, 26); font-family: &quot;Liberation Sans&quot;, sans-serif; line-height: 20px; transform: scaleX(0.9624);">SyncQModeDemo</div>
<svg class="a" style="left:240px;top:510.5px;" width="11" height="11" viewBox="0 0 11 11"><path d="M1 1 L10 10 M10 1 L1 10" stroke="#b0b0b0" stroke-width="1.2"></path></svg>
<div class="a" style="left:71px;top:528.3px;width:193px;height:3px;background:#3f7fca"></div>
<svg class="a" style="left:1432px;top:507px;" width="17" height="17" viewBox="0 0 17 17"><path d="M8.5 0.8 L10.2 0.8 L10.6 3 L12.6 3.9 L14.4 2.6 L15.6 3.8 L14.3 5.7 L15.1 7.6 L17 8 V9.8 L15.1 10.2 L14.3 12.1 L15.6 14 L14.2 15.2 L12.4 13.9 L10.5 14.7 L10.2 17 H7.8 L7.4 14.7 L5.5 13.9 L3.6 15.2 L2.3 14 L3.6 12.1 L2.8 10.2 L0.8 9.8 V7.8 L2.8 7.4 L3.6 5.6 L2.3 3.7 L3.6 2.4 L5.5 3.8 L7.4 3 L7.8 0.8 Z" fill="#6e6e6e"></path><circle cx="8.9" cy="8.9" r="2.7" fill="#e2e5e9"></circle></svg>
<div class="a" style="left:1465px;top:514.5px;width:14px;height:1.8px;background:#6e6e6e"></div>
<div class="a" style="left:26px;top:531px;width:67.5px;height:223px;background:#f2f2f2"></div>
<div class="a" style="left:59px;top:531px;width:1px;height:223px;background:#dcdcdc"></div>
<div class="a" style="left:93.5px;top:531px;width:1px;height:223px;background:#d1d1d1"></div>
<svg class="a" style="left:37px;top:541px;" width="13" height="14" viewBox="0 0 13 14"><path d="M0.8 0.3 L12.5 7 L0.8 13.7 Z" fill="#59a869"></path></svg>
<svg class="a" style="left:34px;top:570px;" width="18" height="18" viewBox="0 0 18 18"><path d="M2.5 15.5 L9.5 8.5" stroke="#666" stroke-width="3.6" stroke-linecap="round"></path><circle cx="11.8" cy="6.2" r="5" fill="#666"></circle><path d="M12.5 4.5 L16.5 0.5 L18 2 L18 6 L14 8" fill="#f2f2f2"></path><rect x="12.3" y="1.2" width="3.4" height="6.5" transform="rotate(45 14 4.5)" fill="#f2f2f2"></rect></svg>
<div class="a" style="left:34px;top:598px;width:19px;height:1px;background:#d6d6d6"></div>
<div class="a" style="left:36px;top:612px;width:13px;height:13px;background:#c9c9c9"></div>
<svg class="a" style="left:34px;top:642px;" width="17" height="14" viewBox="0 0 17 14"><path d="M0.5 3 H4.5 L6 0.8 H11 L12.5 3 H16.5 V13.5 H0.5 Z" fill="#c9c9c9"></path><circle cx="8.5" cy="8" r="3.3" fill="#f2f2f2"></circle><circle cx="8.5" cy="8" r="2" fill="#c9c9c9"></circle></svg>
<svg class="a" style="left:34px;top:671px;" width="19" height="17" viewBox="0 0 19 17"><ellipse cx="8" cy="9" rx="5" ry="5.5" fill="#c9c9c9"></ellipse><path d="M1 4 L4 6.5 M15 4 L12 6.5 M0.5 9.5 H3.5 M1 15 L4 12.5" stroke="#c9c9c9" stroke-width="1.5"></path><path d="M12 10 L18 13 L12 16 Z" fill="#c9c9c9"></path></svg>
<svg class="a" style="left:34px;top:701px;" width="18" height="18" viewBox="0 0 18 18"><path d="M5 4 V1 H17 V17 H5 V14" fill="none" stroke="#c9c9c9" stroke-width="1.6"></path><path d="M0.5 9 H11 M8 5.5 L11.5 9 L8 12.5" fill="none" stroke="#c9c9c9" stroke-width="1.6"></path></svg>
<div class="a" style="left:34px;top:730px;width:19px;height:1px;background:#d6d6d6"></div>
<svg class="a" style="left:37px;top:738px;" width="12" height="9" viewBox="0 0 12 9"><path d="M1 1 L4 4.5 L1 8 M6.5 1 L9.5 4.5 L6.5 8" fill="none" stroke="#555" stroke-width="1.1"></path></svg>
<svg class="a" style="left:70px;top:542px;" width="12" height="16" viewBox="0 0 12 16"><path d="M6 15.5 V1.5 M1 6.5 L6 1.5 L11 6.5" fill="none" stroke="#c9c9c9" stroke-width="1.6"></path></svg>
<svg class="a" style="left:70px;top:571px;" width="12" height="16" viewBox="0 0 12 16"><path d="M6 0.5 V14.5 M1 9.5 L6 14.5 L11 9.5" fill="none" stroke="#c9c9c9" stroke-width="1.6"></path></svg>
<svg class="a" style="left:68px;top:601px;" width="18" height="20" viewBox="0 0 18 20"><path d="M0.5 2 H17 M0.5 7 H17 M0.5 12 H8 M0.5 17 H8" stroke="#555" stroke-width="1.6"></path><path d="M14 8 V12.5 Q14 16 10.5 16 H9.5 M11.5 13.8 L9.2 16 L11.5 18.2" fill="none" stroke="#555" stroke-width="1.4"></path></svg>
<svg class="a" style="left:68px;top:632px;" width="18" height="16" viewBox="0 0 18 16"><path d="M0.5 1 H7 M0.5 6 H7 M0.5 11 H7 M0.5 15 H17" stroke="#555" stroke-width="1.6"></path><path d="M13 1 V10 M9.8 7 L13 10.3 L16.2 7" fill="none" stroke="#555" stroke-width="1.6"></path></svg>
<svg class="a" style="left:67px;top:665px;" width="19" height="16" viewBox="0 0 19 16"><rect x="4" y="0.5" width="11" height="4" fill="#555"></rect><rect x="0.5" y="5" width="18" height="7" rx="1" fill="#555"></rect><rect x="4" y="10" width="11" height="5.5" fill="#fff" stroke="#555" stroke-width="1.2"></rect></svg>
<svg class="a" style="left:69px;top:695px;" width="15" height="17" viewBox="0 0 15 17"><rect x="0.5" y="2" width="14" height="2" fill="#555"></rect><rect x="5" y="0" width="5" height="2" fill="#555"></rect><path d="M1.8 5 H13.2 L12.2 16.5 H2.8 Z" fill="#555"></path></svg>
<div class="a" style="left:94.5px;top:531px;width:1381px;height:223px;background:#fff"></div>
<div class="a" style="left:1475px;top:543px;width:11px;height:211px;background:#e6e6e6"></div>
<div class="a" style="left:94.5px;top:531px;width:1380px;height:223px;overflow:hidden">
<div class="a" style="left:14.0px;top:0px;width:505px;height:13px;background:#edf5ea"></div>
<div class="t" style="left:14.200000000000003px;top:-9.4px;font:15.75px 'Liberation Mono',monospace;line-height:26px;color:#5a5a5a">"C:\Program Files\Java\jdk1.8.0_211\bin\java.exe" ...</div>
<div class="t" style="left:14.200000000000003px;top:16.8px;font:15.75px 'Liberation Mono',monospace;line-height:26px;color:#080808">23:33:06.119 [thread-A] DEBUG com.jony.sync.SyncQModeDemo - A get lock</div>
<div class="t" style="left:14.200000000000003px;top:42.8px;font:15.75px 'Liberation Mono',monospace;line-height:26px;color:#080808">23:33:06.426 [thread-A] DEBUG com.jony.sync.SyncQModeDemo - A release lock</div>
<div class="t" style="left:14.200000000000003px;top:68.8px;font:15.75px 'Liberation Mono',monospace;line-height:26px;color:#080808">23:33:06.426 [thread-C] DEBUG com.jony.sync.SyncQModeDemo - C get lock</div>
<div class="t" style="left:14.200000000000003px;top:94.8px;font:15.75px 'Liberation Mono',monospace;line-height:26px;color:#080808">23:33:06.426 [thread-B] DEBUG com.jony.sync.SyncQModeDemo - B get lock</div>
<div class="t" style="left:14.200000000000003px;top:120.8px;font:15.75px 'Liberation Mono',monospace;line-height:26px;color:#080808">23:33:06.938 [thread-B] DEBUG com.jony.sync.SyncQModeDemo - B release lock</div>
<div class="t" style="left:14.200000000000003px;top:172.8px;font:15.75px 'Liberation Mono',monospace;line-height:26px;color:#23238e">Process finished with exit code 0</div>
</div>
<div class="a" style="left:82.6px;top:541.8px;width:795.5px;height:158px;border:4px solid #f51d10;border-radius:5px 5px 5px 1px;box-sizing:border-box"></div>
<div class="a" style="left:0px;top:754px;width:1512px;height:1px;background:#d1d1d1"></div>
<div class="a" style="left:0px;top:755px;width:1512px;height:25px;background:#f2f2f2"></div>
<div class="a" style="left:0px;top:780px;width:1512px;height:1px;background:#e0e0e0"></div>
<div class="a" style="left:896.8px;top:755px;width:64.5px;height:25px;background:#c4c4c4"></div>
<div class="t" style="left: 58px; top: 759px; font-size: 16px; color: rgb(26, 26, 26); font-family: &quot;Liberation Sans&quot;, sans-serif; line-height: 20px; transform: scaleX(0.8721);">Version Control</div>
<div class="t" style="left: 198px; top: 759px; font-size: 16px; color: rgb(26, 26, 26); font-family: &quot;Liberation Sans&quot;, sans-serif; line-height: 20px; transform: scaleX(0.8272);">TODO</div>
<div class="t" style="left: 278.4px; top: 759px; font-size: 16px; color: rgb(26, 26, 26); font-family: &quot;Liberation Sans&quot;, sans-serif; line-height: 20px; transform: scaleX(0.8331);">Problems</div>
<div class="t" style="left: 377.3px; top: 759px; font-size: 16px; color: rgb(26, 26, 26); font-family: &quot;Liberation Sans&quot;, sans-serif; line-height: 20px; transform: scaleX(0.8819);">Profiler</div>
<div class="t" style="left: 466.6px; top: 759px; font-size: 16px; color: rgb(26, 26, 26); font-family: &quot;Liberation Sans&quot;, sans-serif; line-height: 20px; transform: scaleX(0.8798);">Terminal</div>
<div class="t" style="left: 561.8px; top: 759px; font-size: 16px; color: rgb(26, 26, 26); font-family: &quot;Liberation Sans&quot;, sans-serif; line-height: 20px; transform: scaleX(0.8769);">Build</div>
<div class="t" style="left: 637px; top: 759px; font-size: 16px; color: rgb(26, 26, 26); font-family: &quot;Liberation Sans&quot;, sans-serif; line-height: 20px; transform: scaleX(0.8504);">Nocalhost Console</div>
<div class="t" style="left: 799.2px; top: 759px; font-size: 16px; color: rgb(26, 26, 26); font-family: &quot;Liberation Sans&quot;, sans-serif; line-height: 20px; transform: scaleX(0.8387);">Dependencies</div>
<div class="t" style="left: 927.5px; top: 759px; font-size: 16px; color: rgb(26, 26, 26); font-family: &quot;Liberation Sans&quot;, sans-serif; line-height: 20px; transform: scaleX(0.8447);">Run</div>
<div class="t" style="left: 993px; top: 759px; font-size: 16px; color: rgb(26, 26, 26); font-family: &quot;Liberation Sans&quot;, sans-serif; line-height: 20px; transform: scaleX(0.8714);">Spring</div>
<div class="t" style="left: 1416.4px; top: 759px; font-size: 16px; color: rgb(26, 26, 26); font-family: &quot;Liberation Sans&quot;, sans-serif; line-height: 20px; transform: scaleX(0.8271);">Event Log</div>
<svg class="a" style="left:40px;top:762px;" width="12" height="15" viewBox="0 0 12 15"><circle cx="2.8" cy="2.8" r="2.2" fill="#6e6e6e"></circle><circle cx="2.8" cy="12.5" r="2.2" fill="#6e6e6e"></circle><circle cx="9.5" cy="3.5" r="2.2" fill="#6e6e6e"></circle><path d="M2.8 3 V12.5 M9.5 4 Q9.5 9 3 11" fill="none" stroke="#6e6e6e" stroke-width="1.8"></path></svg>
<svg class="a" style="left:180px;top:763px;" width="13" height="12" viewBox="0 0 13 12"><path d="M0 1.5 H2 M0 5.5 H2 M0 9.5 H2 M3.5 1.5 H13 M3.5 5.5 H13 M3.5 9.5 H13" stroke="#6e6e6e" stroke-width="1.8"></path></svg>
<svg class="a" style="left:259px;top:761px;" width="15" height="15" viewBox="0 0 15 15"><circle cx="7.5" cy="7.5" r="7" fill="#6e6e6e"></circle><path d="M7.5 3 V8.5" stroke="#fff" stroke-width="2"></path><circle cx="7.5" cy="11" r="1.1" fill="#fff"></circle></svg>
<svg class="a" style="left:357px;top:760px;" width="16" height="17" viewBox="0 0 16 17"><path d="M8 2 A6 6 0 1 0 6 13.5" fill="none" stroke="#6e6e6e" stroke-width="1.6"></path><path d="M7 4 V8 L5 10" fill="none" stroke="#6e6e6e" stroke-width="1.3"></path><path d="M8 7 L15.5 11.5 L8 16 Z" fill="#6e6e6e"></path></svg>
<svg class="a" style="left:447px;top:762px;" width="14" height="13" viewBox="0 0 14 13"><rect x="0" y="0" width="14" height="13" fill="#6e6e6e"></rect><path d="M2.5 3 L5.5 5.5 L2.5 8 M6 9.5 H10" fill="none" stroke="#fff" stroke-width="1.2"></path></svg>
<svg class="a" style="left:542px;top:760px;" width="16" height="16" viewBox="0 0 16 16"><path d="M1 4.5 L5.5 0.8 L8.5 2.8 L7 4.3 L15 12.5 L13 14.5 L5 6.3 L3.5 7.8 Z" fill="#6e6e6e"></path></svg>
<svg class="a" style="left:617px;top:763px;" width="17" height="11" viewBox="0 0 17 11"><circle cx="3" cy="6.5" r="2.8" fill="#6e6e6e"></circle><circle cx="6.5" cy="4" r="3" fill="#6e6e6e"></circle><circle cx="10" cy="7" r="3" fill="#6e6e6e"></circle><path d="M11.5 3.5 L15.5 1 M12.5 1 H15.5 V4" fill="none" stroke="#6e6e6e" stroke-width="1.3"></path></svg>
<svg class="a" style="left:780px;top:760px;" width="15" height="17" viewBox="0 0 15 17"><path d="M7.5 0.5 L14.5 4 L7.5 7.5 L0.5 4 Z" fill="#6e6e6e"></path><path d="M0.5 8 L7.5 11.5 L14.5 8 M0.5 12 L7.5 15.5 L14.5 12" fill="none" stroke="#6e6e6e" stroke-width="1.5"></path></svg>
<svg class="a" style="left:910px;top:762px;" width="10" height="13" viewBox="0 0 10 13"><path d="M0.5 0.5 L9.5 6.5 L0.5 12.5 Z" fill="#6e6e6e"></path></svg>
<svg class="a" style="left:973px;top:761px;" width="16" height="14" viewBox="0 0 16 14"><path d="M1 13 Q0 5 6 2.5 Q11 0.5 15.5 0.5 Q15.5 8 12 11 Q8 14 2.5 12 Z" fill="#6e6e6e"></path><path d="M1.5 13 Q6 8 11 5" fill="none" stroke="#f2f2f2" stroke-width="1"></path></svg>
<svg class="a" style="left:1396px;top:761px;" width="16" height="17" viewBox="0 0 16 17"><circle cx="7.5" cy="7.5" r="6.3" fill="none" stroke="#444" stroke-width="1.6"></circle></svg>
<div class="a" style="left:0px;top:781px;width:1512px;height:22px;background:#f2f2f2"></div>
<svg class="a" style="left:6px;top:786px;" width="16" height="15" viewBox="0 0 16 15"><rect x="3.5" y="0.5" width="11" height="11" fill="#fff" stroke="#6e6e6e" stroke-width="1.1"></rect><path d="M1 3 V14 H12" fill="none" stroke="#6e6e6e" stroke-width="1.1"></path></svg>
<div class="t" style="left: 31.7px; top: 784px; font-size: 16px; color: rgb(26, 26, 26); font-family: &quot;Liberation Sans&quot;, sans-serif; line-height: 20px; transform: scaleX(0.9454);">Build completed successfully in 5 sec, 438 ms (9 minutes ago)</div>
<svg class="a" style="left:979px;top:786px;" width="20" height="14" viewBox="0 0 20 14"><circle cx="4" cy="9" r="3.5" fill="#e052e0"></circle><rect x="6" y="2" width="6" height="8" rx="2" fill="#8a4dfa"></rect><path d="M9 8 L14 13 L19 4 V10 Z" fill="#1fb6f2"></path><rect x="14" y="2" width="5" height="5" fill="#1f9af2"></rect></svg>
<div class="t" style="left: 1004px; top: 784px; font-size: 16px; color: rgb(26, 26, 26); font-family: &quot;Liberation Sans&quot;, sans-serif; line-height: 20px; transform: scaleX(0.9857);">Waiting for enter DevMode</div>
<svg class="a" style="left:1201px;top:784px;" width="22" height="18" viewBox="0 0 22 18"><ellipse cx="11" cy="9" rx="9" ry="6.5" fill="none" stroke="#111" stroke-width="2"></ellipse><path d="M3 2 L19 16" stroke="#111" stroke-width="2.2"></path><path d="M5 15 L17 15" stroke="#111" stroke-width="1.6"></path></svg>
<div class="t" style="left: 1235.8px; top: 784px; font-size: 16px; color: rgb(26, 26, 26); font-family: &quot;Liberation Sans&quot;, sans-serif; line-height: 20px; transform: scaleX(0.9762);">4:71</div>
<div class="t" style="left: 1279.5px; top: 784px; font-size: 16px; color: rgb(26, 26, 26); font-family: &quot;Liberation Sans&quot;, sans-serif; line-height: 20px; transform: scaleX(0.8401);">CRLF</div>
<div class="t" style="left: 1328.7px; top: 784px; font-size: 16px; color: rgb(26, 26, 26); font-family: &quot;Liberation Sans&quot;, sans-serif; line-height: 20px; transform: scaleX(0.9332);">UTF-8</div>
<div class="t" style="left: 1383.6px; top: 784px; font-size: 16px; color: rgb(26, 26, 26); font-family: &quot;Liberation Sans&quot;, sans-serif; line-height: 20px; transform: scaleX(0.9212);">4 spaces</div>
<svg class="a" style="left:1455px;top:784px;" width="15" height="17" viewBox="0 0 15 17"><path d="M3 8 V5 Q3 1 6.5 1 Q10 1 10 5" fill="none" stroke="#6e6e6e" stroke-width="1.6"></path><rect x="4" y="8" width="10.5" height="8.5" fill="#6e6e6e"></rect></svg>
<svg class="a" style="left:1482px;top:783px;" width="21" height="19" viewBox="0 0 21 19"><ellipse cx="8" cy="9" rx="7.5" ry="6.5" fill="#6e6e6e"></ellipse><ellipse cx="12" cy="7.5" rx="5.5" ry="5.5" fill="#6e6e6e"></ellipse><text x="6.5" y="12" font-family="Liberation Sans" font-weight="bold" font-size="10" fill="#fff">?</text><circle cx="16" cy="15" r="3.5" fill="none" stroke="#6e6e6e" stroke-width="1.8" stroke-dasharray="1.5 0.8"></circle></svg>
<div class="t" style="left: 1329px; top: 767px; font-size: 19px; color: rgba(110, 110, 110, 0.55); font-family: &quot;Liberation Sans&quot;, sans-serif; line-height: 24px; transform: scaleX(0.9341);">@稀土掘金技术社区</div>
<div class="a" style="left:0px;top:802.5px;width:1512px;height:10px;background:#1e222b"></div>
<div class="a" style="left:296px;top:802.5px;width:58px;height:10px;background:#1b3550"></div>
<div class="a" style="left:1502px;top:802.5px;width:10px;height:10px;background:#2a2f38"></div>
<div class="a" style="left:1367px;top:807px;width:7px;height:5px;background:#aeb2b8;opacity:0.6"></div>
<div class="a" style="left:1377px;top:807px;width:7px;height:5px;background:#aeb2b8;opacity:0.6"></div>
<div class="a" style="left:1392px;top:807px;width:2px;height:5px;background:#aeb2b8;opacity:0.6"></div>
<div class="a" style="left:1404px;top:807px;width:7px;height:5px;background:#aeb2b8;opacity:0.6"></div>
<div class="a" style="left:1414px;top:807px;width:7px;height:5px;background:#aeb2b8;opacity:0.6"></div>
</body></html>
